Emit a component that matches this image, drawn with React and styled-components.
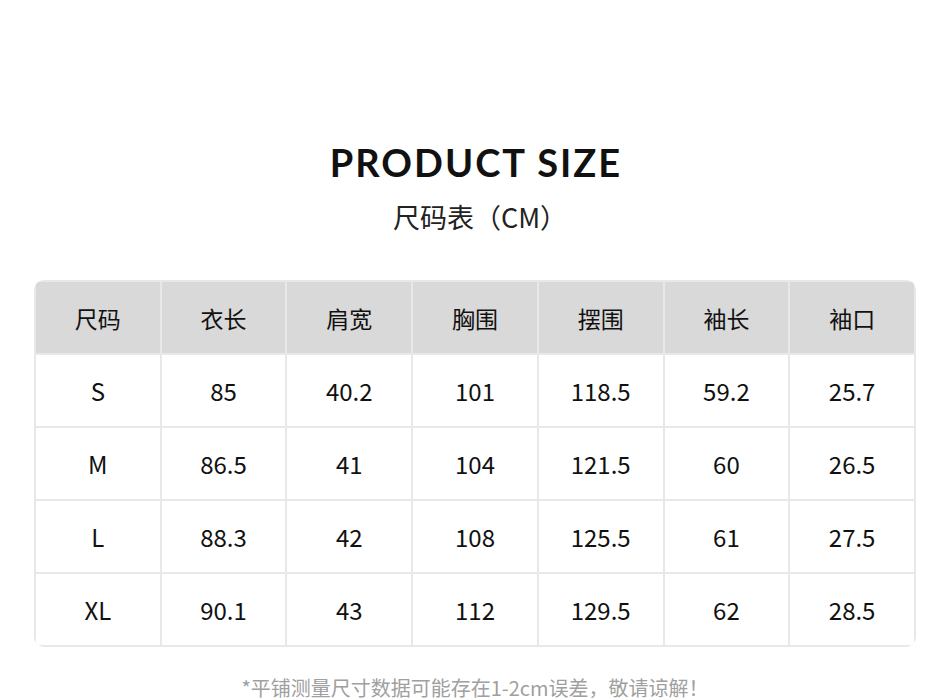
import React from "react";
import styled, { createGlobalStyle } from "styled-components";

const Global = createGlobalStyle`
  html, body { margin: 0; padding: 0; background: #fff; }
  body { font-family: "Noto Sans CJK SC", "Noto Sans", sans-serif; }
`;

const Page = styled.div`
  width: 950px;
  height: 698px;
  overflow: hidden;
  display: flex;
  flex-direction: column;
  align-items: center;
  & > * { flex-shrink: 0; }
`;

const Title = styled.h1`
  margin: 140px 0 0;
  font-family: Lato, "Liberation Sans", sans-serif;
  font-weight: 700;
  font-size: 38px;
  line-height: 44px;
  letter-spacing: 2px;
  color: #111;
  padding-left: 2px;
`;

const Subtitle = styled.h2`
  margin: 14px 0 0;
  font-family: "Noto Sans CJK SC", sans-serif;
  font-weight: 400;
  font-size: 27px;
  line-height: 38px;
  color: #222;
  padding-left: 10px;
`;

const Table = styled.div`
  margin-top: 44px;
  width: 882px;
  box-sizing: border-box;
  display: grid;
  grid-template-columns: repeat(7, 1fr);
  gap: 2px;
  padding: 2px;
  background: #e8e8e8;
  border-radius: 10px;
  overflow: hidden;
`;

const Cell = styled.div`
  height: 71px;
  display: flex;
  align-items: center;
  justify-content: center;
  background: ${(p) => (p.$head ? "#d9d9d9" : "#fff")};
  font-family: "Noto Sans CJK SC", sans-serif;
  font-size: ${(p) => (p.$head ? "23px" : "24px")};
  color: #111;
`;

const Note = styled.p`
  margin: 26px 0 0;
  font-family: "Noto Sans CJK SC", sans-serif;
  font-size: 20px;
  line-height: 30px;
  color: #a0a0a0;
  white-space: nowrap;
`;

const head = ["尺码", "衣长", "肩宽", "胸围", "摆围", "袖长", "袖口"];
const rows = [
  ["S", "85", "40.2", "101", "118.5", "59.2", "25.7"],
  ["M", "86.5", "41", "104", "121.5", "60", "26.5"],
  ["L", "88.3", "42", "108", "125.5", "61", "27.5"],
  ["XL", "90.1", "43", "112", "129.5", "62", "28.5"],
];

export default function App() {
  return (
    <Page>
      <Global />
      <Title>PRODUCT SIZE</Title>
      <Subtitle>尺码表（CM）</Subtitle>
      <Table>
        {head.map((h) => (
          <Cell $head key={h}>{h}</Cell>
        ))}
        {rows.map((r) =>
          r.map((v, i) => <Cell key={r[0] + i}>{v}</Cell>)
        )}
      </Table>
      <Note>*平铺测量尺寸数据可能存在1-2cm误差，敬请谅解！</Note>
    </Page>
  );
}
